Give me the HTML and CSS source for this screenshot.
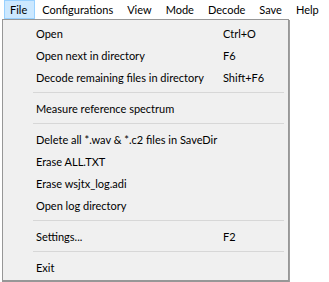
FILE: index.html
```html
<!DOCTYPE html>
<html lang="en">

<head>
    <meta charset="UTF-8">
    <title>WSJT-X File menu</title>
    <link rel="stylesheet" href="styles.css">
</head>

<body>
    <div class="menubar">
        <span class="menu-title active">File</span>
        <span class="menu-title">Configurations</span>
        <span class="menu-title">View</span>
        <span class="menu-title">Mode</span>
        <span class="menu-title">Decode</span>
        <span class="menu-title">Save</span>
        <span class="menu-title">Help</span>
    </div>

    <div class="popup">
        <div class="item"><span class="label">Open</span><span class="key">Ctrl+O</span></div>
        <div class="item"><span class="label">Open next in directory</span><span class="key">F6</span></div>
        <div class="item"><span class="label">Decode remaining files in directory</span><span class="key">Shift+F6</span></div>
        <div class="sep"></div>
        <div class="item"><span class="label">Measure reference spectrum</span></div>
        <div class="sep"></div>
        <div class="item"><span class="label">Delete all *.wav &amp; *.c2 files in SaveDir</span></div>
        <div class="item"><span class="label">Erase ALL.TXT</span></div>
        <div class="item"><span class="label">Erase wsjtx_log.adi</span></div>
        <div class="item"><span class="label">Open log directory</span></div>
        <div class="sep"></div>
        <div class="item"><span class="label">Settings...</span><span class="key">F2</span></div>
        <div class="sep"></div>
        <div class="item"><span class="label">Exit</span></div>
    </div>
</body>

</html>
```

FILE: styles.css
```css
* {
    margin: 0;
    padding: 0;
    box-sizing: border-box;
}

body {
    width: 329px;
    height: 282px;
    background: #ffffff;
    font-family: Lato, 'Open Sans', sans-serif;
    font-size: 11px;
    color: #000;
    overflow: hidden;
    position: relative;
}

.menubar {
    display: flex;
    height: 19px;
    padding-left: 4px;
    background: #ffffff;
}

.menu-title {
    display: flex;
    align-items: center;
    height: 19px;
    padding: 0 6px 1px 5px;
    margin-right: 1px;
    border: 1px solid transparent;
    white-space: nowrap;
}

.menu-title.active {
    background: #cce8ff;
    border-color: #99d1ff;
    padding-right: 7px;
}

.popup {
    position: absolute;
    top: 19px;
    left: 2px;
    width: 287px;
    padding: 2px;
    background: #f0f0f0;
    border: 1px solid #979797;
    border-bottom-width: 2px;
    box-shadow: 1px 1px 0 #a0a0a0;
}

.item {
    display: flex;
    align-items: center;
    height: 22px;
}

.label {
    width: 218px;
    padding-left: 31px;
    white-space: nowrap;
}

.key {
    white-space: nowrap;
}

.sep {
    height: 9px;
    display: flex;
    align-items: center;
    margin: 0 2px 0 28px;
}

.sep::after {
    content: "";
    display: block;
    width: 100%;
    height: 1px;
    background: #d7d7d7;
}
```
